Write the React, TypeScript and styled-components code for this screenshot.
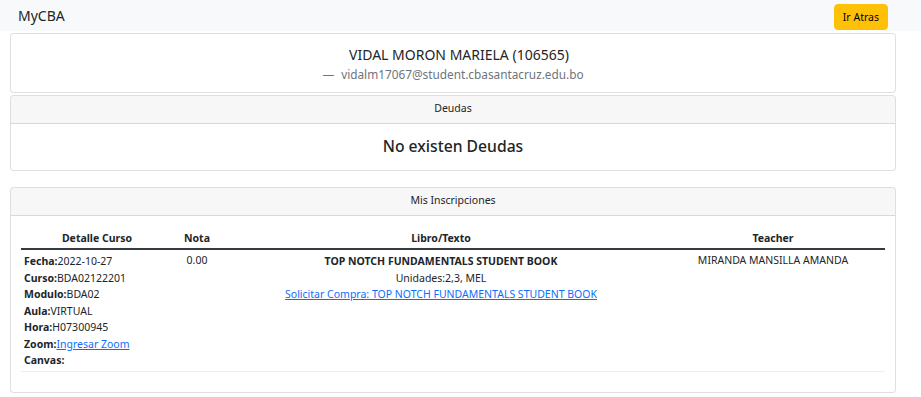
import React from "react";
import styled, { createGlobalStyle } from "styled-components";

const GlobalStyle = createGlobalStyle`
  body {
    margin: 0;
    font-family: "Noto Sans", "Open Sans", sans-serif;
    font-size: 10.5px;
    line-height: 1.5;
    color: #212529;
    background: #fff;
  }
`;

export default function App() {
  return (
    <>
      <GlobalStyle />
      <Navbar>
        <Brand>MyCBA</Brand>
        <BackButton>Ir Atras</BackButton>
      </Navbar>
      <Page>
        <Card>
          <ProfileBody>
            <Name>VIDAL MORON MARIELA (106565)</Name>
            <Email>
              <Dash>—</Dash>vidalm17067@student.cbasantacruz.edu.bo
            </Email>
          </ProfileBody>
        </Card>
        <Card>
          <CardHeader>Deudas</CardHeader>
          <DebtBody>No existen Deudas</DebtBody>
        </Card>
        <Card $spaced>
          <CardHeader>Mis Inscripciones</CardHeader>
          <TableBody>
            <Table>
              <colgroup>
                <col style={{ width: 152 }} />
                <col style={{ width: 48 }} />
                <col style={{ width: 440 }} />
                <col />
              </colgroup>
              <thead>
                <tr>
                  <Th>Detalle Curso</Th>
                  <Th>Nota</Th>
                  <Th>Libro/Texto</Th>
                  <Th>Teacher</Th>
                </tr>
              </thead>
              <tbody>
                <tr>
                  <Td $left>
                    <Line><b>Fecha:</b>2022-10-27</Line>
                    <Line><b>Curso:</b>BDA02122201</Line>
                    <Line><b>Modulo:</b>BDA02</Line>
                    <Line><b>Aula:</b>VIRTUAL</Line>
                    <Line><b>Hora:</b>H07300945</Line>
                    <Line><b>Zoom:</b><Link href="#">Ingresar Zoom</Link></Line>
                    <Line><b>Canvas:</b></Line>
                  </Td>
                  <Td>0.00</Td>
                  <Td>
                    <Line><b>TOP NOTCH FUNDAMENTALS STUDENT BOOK</b></Line>
                    <Line>Unidades:2,3, MEL</Line>
                    <Line><Link href="#">Solicitar Compra: TOP NOTCH FUNDAMENTALS STUDENT BOOK</Link></Line>
                  </Td>
                  <Td>MIRANDA MANSILLA AMANDA</Td>
                </tr>
              </tbody>
            </Table>
          </TableBody>
        </Card>
      </Page>
    </>
  );
}

const Navbar = styled.nav`
  height: 31px;
  background: #f8f9fa;
  display: flex;
  align-items: center;
  justify-content: space-between;
  padding: 0 33px 0 18px;
`;

const Brand = styled.span`
  font-size: 14px;
  color: #212529;
`;

const BackButton = styled.button`
  height: 26px;
  margin-top: 2px;
  padding: 0 8px;
  background: #ffc107;
  border: 1px solid #ffc107;
  border-radius: 4px;
  font-family: inherit;
  font-size: 10.5px;
  color: #000;
`;

const Page = styled.div`
  margin: 2px 25px 0 10px;
  display: flex;
  flex-direction: column;
  gap: 2px;
`;

const Card = styled.div<{ $spaced?: boolean }>`
  border: 1px solid rgba(0, 0, 0, 0.125);
  border-radius: 4px;
  background: #fff;
  overflow: hidden;
  margin-top: ${(p) => (p.$spaced ? "14px" : "0")};
`;

const ProfileBody = styled.div`
  padding: 10px 11px 8px;
  text-align: center;
`;

const Name = styled.div`
  font-size: 14px;
  line-height: 1.5;
  color: #212529;
  padding-left: 12px;
`;

const Email = styled.div`
  font-size: 11.8px;
  line-height: 1.5;
  color: #6c757d;
  margin-top: 1px;
`;

const Dash = styled.span`
  margin-right: 7px;
`;

const CardHeader = styled.div`
  height: 27px;
  display: flex;
  align-items: center;
  justify-content: center;
  background: rgba(0, 0, 0, 0.03);
  border-bottom: 1px solid rgba(0, 0, 0, 0.125);
  font-size: 10.5px;
  color: #212529;
`;

const DebtBody = styled.div`
  height: 46px;
  display: flex;
  align-items: center;
  justify-content: center;
  font-size: 15.7px;
  font-weight: 500;
`;

const TableBody = styled.div`
  padding: 11px 10px 20px;
`;

const Table = styled.table`
  width: 100%;
  border-collapse: collapse;
  table-layout: fixed;
`;

const Th = styled.th`
  text-align: center;
  font-weight: 700;
  padding: 4px 3px 2px;
  border-bottom: 2px solid #343a40;
`;

const Td = styled.td<{ $left?: boolean }>`
  text-align: ${(p) => (p.$left ? "left" : "center")};
  vertical-align: top;
  padding: 3px 3px 2px;
  border-bottom: 1px solid #eceeef;
`;

const Line = styled.div`
  line-height: 16.5px;
`;

const Link = styled.a`
  color: #0d6efd;
  text-decoration: underline;
`;
